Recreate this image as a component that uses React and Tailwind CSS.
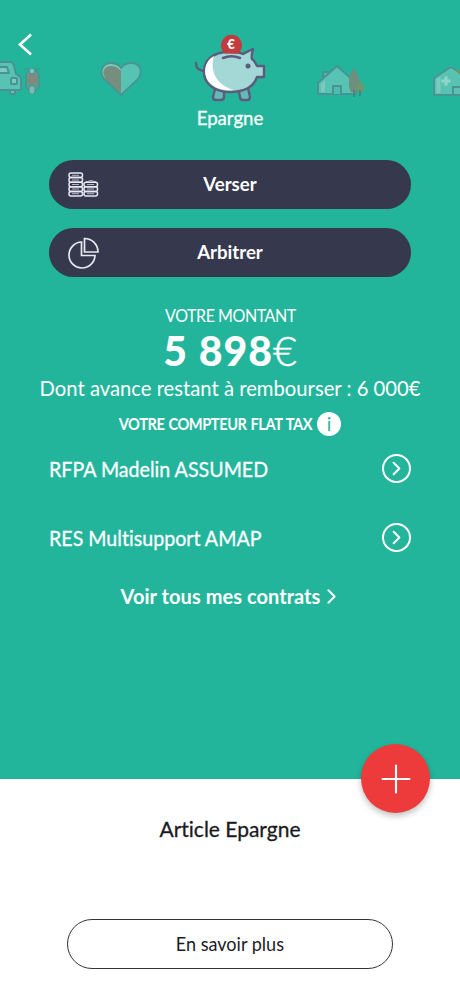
import { ChevronRight, Plus } from "lucide-react";

const contracts = ["RFPA Madelin ASSUMED", "RES Multisupport AMAP"];

function CarIcon() {
  return (
    <svg width="84" height="40" viewBox="0 0 84 40" fill="none">
      <g stroke="#4a9296" strokeWidth="2" strokeLinejoin="round">
        <path d="M40 30v4h5v-4" fill="#58c3b2" />
        <path d="M10 30V15l6-2 4-11h20q3 0 4 4l2 8q5 2 5 5v11Z" fill="#58c3b2" />
        <path d="M20 7h17l2 6H20Z" fill="#7accc2" />
        <rect x="41" y="18" width="6" height="6" rx="1" fill="#7accc2" />
      </g>
      <path d="M54 9h16" stroke="#4a9296" strokeWidth="1.2" />
      <rect x="56" y="11" width="13" height="19" rx="4" fill="#5f9a8c" stroke="#4a9296" strokeWidth="1.5" />
      <rect x="58" y="14" width="9" height="10" rx="2" fill="#84897b" />
      <circle cx="62" cy="11" r="2.800" fill="#75cabd" stroke="#4a9296" />
      <path d="M59 27q3-3 6 0v5q-3 5-6 0Z" fill="#71bfb4" stroke="#4a9296" />
    </svg>
  );
}

function HeartIcon() {
  return (
    <svg width="42" height="36" viewBox="0 0 42 36">
      <path d="M21 34 4 18C-1 11 2 2 11 2c5 0 8 2 10 5 3-4 6-5 10-5 10 0 12 9 7 16Z" fill="#58c3b2" />
      <path d="M21 33 5 18C0 11 3 3 11 3c5 0 8 2 10 5Z" fill="#758e7e" />
      <path d="M4 17C0 10 4 4 11 4c5 0 8 2 10 5" fill="none" stroke="#7bcabd" strokeWidth="2" />
      <path d="M21 34 4 18C-1 11 2 2 11 2c5 0 8 2 10 5 3-4 6-5 10-5 10 0 12 9 7 16Z" fill="none" stroke="#4a9395" strokeWidth="1.8" />
    </svg>
  );
}

function PiggyIcon() {
  return (
    <svg width="72" height="70" viewBox="0 0 72 70" fill="none">
      <g stroke="#5d5b7b" strokeWidth="2.4" strokeLinejoin="round" strokeLinecap="round">
        <path d="m21 56-2 8q0 3 3 3h5q3 0 3-3v-5M45 59l1 5q0 3 3 3h4q3 0 3-3l-2-9" fill="#64bbb6" />
        <path d="M2 30c0 5 2 7 8 8" />
        <path d="M10 39c0-12 9-20 25-20 6 0 10 0 14 2 3-2 6-3 10-5-1 4-2 7-1 10 3 2 4 5 5 7h7v11h-7c-3 9-12 15-27 15-15 0-26-8-26-20Z" fill="#a3d8d6" />
      </g>
      <path d="M20 23C9 29 9 43 16 50c6 6 15 8 24 7-16-4-25-18-20-34Z" fill="white" />
      <path d="M29 25c5-2 12-2 17 0" stroke="#5d5b7b" strokeWidth="2.500" strokeLinecap="round" />
      <circle cx="54" cy="33" r="2.500" fill="#5d5b7b" />
      <path d="M31 20.500a10.500 10.500 0 1 1 13 0Z" fill="#c33b3c" />
      <text x="37" y="15.500" textAnchor="middle" className="fill-white text-[13px] font-black">€</text>
    </svg>
  );
}

function HouseIcon() {
  return (
    <svg width="50" height="34" viewBox="0 0 50 34" fill="none">
      <g stroke="#4a9395" strokeWidth="2" strokeLinejoin="round">
        <path d="M7 15V8h5v3" fill="#4cbcab" />
        <path d="M2 30V19L21 2l19 17v11Z" fill="#58c3b2" />
        <path d="M17 30v-8h8v8" fill="#4cbcab" />
      </g>
      <path d="M5 28v-8l4-4v12Z" fill="#7bcabd" />
      <path d="M38 4c-5 7-7 18-3 24h7c4-6 1-17-4-24Z" fill="#6f8f7e" />
      <path d="M44 17c-4 4-4 7-2 11h5c3-4 1-8-3-11Z" fill="#6a9a6b" />
      <path d="M38 26v7M44 26v6" stroke="#467f80" strokeWidth="1.500" />
    </svg>
  );
}

function CareHomeIcon() {
  return (
    <svg width="50" height="34" viewBox="0 0 50 34" fill="none">
      <path d="M7 31V14L24 3l18 11v17Z" fill="#58c3b2" stroke="#4a9395" strokeWidth="2" strokeLinejoin="round" />
      <path d="M9.500 29V15l4-2.500V29Z" fill="#7bcabd" />
      <path d="M19 12.500v9M14.500 17h9" stroke="#91d6cb" strokeWidth="3" />
      <path d="M26 31v-8h9v8" stroke="#4a9395" strokeWidth="2" />
      <path d="m28 6 9 9v-8Z" fill="#829158" />
    </svg>
  );
}

function CoinsIcon() {
  return (
    <svg width="32" height="26" viewBox="0 0 32 26" fill="none" stroke="#e9e9f3" strokeWidth="1.500">
      <rect x="2" y="1" width="13.500" height="4.600" rx="2" />
      <rect x="2" y="5.600" width="13.500" height="4.600" rx="2" />
      <rect x="2" y="10.200" width="13.500" height="4.600" rx="2" />
      <rect x="2" y="14.800" width="13.500" height="4.600" rx="2" />
      <rect x="2" y="19.400" width="13.500" height="4.600" rx="2" />
      <rect x="17" y="10.200" width="13.500" height="4.600" rx="2" />
      <rect x="17" y="14.800" width="13.500" height="4.600" rx="2" />
      <rect x="17" y="19.400" width="13.500" height="4.600" rx="2" />
      <path d="M19 10q5-3 10 0M5 3.300h7M5 8h7M5 12.500h7M5 17h7M5 21.700h7M20 12.500h7M20 17h7M20 21.700h7" strokeWidth=".7" />
    </svg>
  );
}

function PieIcon() {
  return (
    <svg width="32" height="32" viewBox="0 0 32 32" fill="none" stroke="#e9e9f3" strokeWidth="1.700">
      <path d="M14.500 5A13 13 0 1 0 28 18.500H14.500Z" />
      <path d="M17.500 1.500V15H31A13.500 13.500 0 0 0 17.500 1.500Z" />
    </svg>
  );
}

function ActionButton({ icon, label }) {
  return (
    <button className="grid h-[49px] w-[362px] grid-cols-[34px_1fr_34px] items-center rounded-full bg-[#36384e] px-[18px] text-[19px] font-bold text-white">
      {icon}
      <span className="scale-x-[0.98]">{label}</span>
    </button>
  );
}

function App() {
  return (
    <div className="flex h-[996px] w-[460px] flex-col overflow-hidden bg-white font-['Lato',sans-serif] text-white [font-variant-ligatures:none]">
      <main className="relative flex h-[779px] shrink-0 flex-col items-center bg-[#23b59b]">
        <button className="absolute left-[17px] top-[33px]">
          <svg width="16" height="23" viewBox="0 0 16 23" fill="none" stroke="currentColor" strokeWidth="2.600">
            <path d="M14 1.500 3 11.500l11 10" />
          </svg>
        </button>
        <nav className="mt-[33px] flex h-[70px] w-full items-center justify-center overflow-hidden">
          <div className="flex w-[109px] shrink-0 justify-center pt-6">
            <CarIcon />
          </div>
          <div className="flex w-[109px] shrink-0 justify-center pt-[21px]">
            <HeartIcon />
          </div>
          <div className="flex w-[109px] shrink-0 justify-center">
            <PiggyIcon />
          </div>
          <div className="flex w-[109px] shrink-0 justify-center pl-[3px] pt-[26px]">
            <HouseIcon />
          </div>
          <div className="flex w-[109px] shrink-0 justify-center pl-2 pt-[26px]">
            <CareHomeIcon />
          </div>
        </nav>
        <p className="h-[57px] scale-x-[0.98] pt-[2px] text-[19px] font-normal leading-[26px] [-webkit-text-stroke:0.3px]">Epargne</p>

        <div className="flex flex-col gap-[19px]">
          <ActionButton icon={<CoinsIcon />} label="Verser" />
          <ActionButton icon={<PieIcon />} label="Arbitrer" />
        </div>

        <p className="mt-[26px] scale-x-[0.89] text-[18px] leading-6 tracking-[-0.5px]">VOTRE MONTANT</p>
        <p className="-mt-px mb-px text-[41px] font-black leading-[50px] tracking-[1px]">
          5 898<span className="font-light tracking-normal [-webkit-text-stroke:0.5px]">€</span>
        </p>
        <p className="-mt-px mb-px scale-x-[0.92] whitespace-nowrap text-[22px] leading-6">Dont avance restant à rembourser : 6 000€</p>
        <div className="mt-[11px] flex h-6 items-center gap-[5px]">
          <div className="flex w-[193px] justify-center whitespace-nowrap">
            <p className="shrink-0 scale-x-[0.86] text-[17px] font-bold tracking-[-0.5px] [word-spacing:1px]">VOTRE COMPTEUR FLAT TAX</p>
          </div>
          <span className="flex size-6 items-center justify-center rounded-full bg-white text-[19px] text-[#23b59b]">i</span>
        </div>

        <ul className="-mt-[2px] w-[362px]">
          {contracts.map((name) => (
            <li key={name} className="flex h-[69px] items-center justify-between">
              <span className="origin-left scale-x-[0.935] text-[21px] [-webkit-text-stroke:0.3px]">{name}</span>
              <span className="mb-px flex size-[29px] items-center justify-center rounded-full border-2 border-white">
                <ChevronRight size={23} strokeWidth={2.1} />
              </span>
            </li>
          ))}
        </ul>
        <a className="mt-[10px] flex items-center text-[20px] font-bold leading-6 tracking-[0.05px]">
          Voir tous mes contrats
          <ChevronRight size={25} strokeWidth={1.900} className="-ml-px -mr-[5px] mt-[2px]" />
        </a>

        <button className="absolute -bottom-[34px] right-[30px] flex size-[69px] items-center justify-center rounded-full bg-[#ed3b3c] shadow-[0_3px_6px_rgba(0,0,0,0.25)]">
          <Plus size={46} strokeWidth={1.1} />
        </button>
      </main>

      <section className="flex flex-col items-center text-[#1b1b1f]">
        <h2 className="mt-[38px] text-[21px] font-normal leading-6 [-webkit-text-stroke:0.3px]">Article Epargne</h2>
        <button className="mt-[78px] h-[50px] w-[326px] rounded-full border border-[#333] text-[19px]">
          <span className="inline-block scale-x-[0.95]">En savoir plus</span>
        </button>
      </section>
    </div>
  );
}

export default App;
